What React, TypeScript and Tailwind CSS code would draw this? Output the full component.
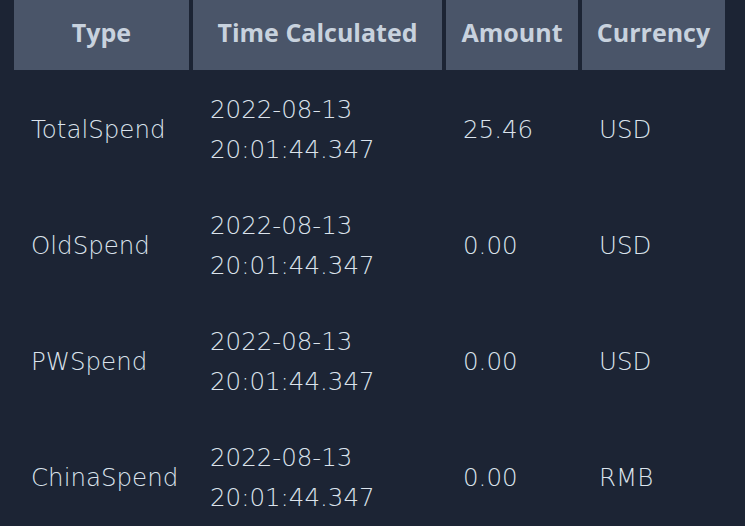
const rows = [
  { type: "TotalSpend", date: "2022-08-13", time: "20:01:44.347", amount: "25.46", currency: "USD" },
  { type: "OldSpend", date: "2022-08-13", time: "20:01:44.347", amount: "0.00", currency: "USD" },
  { type: "PWSpend", date: "2022-08-13", time: "20:01:44.347", amount: "0.00", currency: "USD" },
  { type: "ChinaSpend", date: "2022-08-13", time: "20:01:44.347", amount: "0.00", currency: "RMB" },
];

const headers = ["Type", "Time Calculated", "Amount", "Currency"];

const cell = "h-[116px] flex items-center pl-[17px] pt-[4px] text-[#dbe3ec] text-[24.5px] font-light";

export default function App() {
  return (
    <div
      className="w-[745px] h-[526px] overflow-hidden bg-[#1c2434] px-[14px]"
      style={{ fontFamily: '"DejaVu Sans", "Open Sans", sans-serif' }}
    >
      <div className="grid grid-cols-[175px_249px_132px_143px] gap-x-1">
        {headers.map((h) => (
          <div
            key={h}
            className="h-[70px] flex items-center justify-center pb-[4px] bg-[#4a5569] text-[#c8d2de] text-[25px] font-bold font-['Open_Sans',sans-serif]"
          >
            {h}
          </div>
        ))}
        {rows.map((r) => (
          <div key={r.type} className="contents">
            <div className={cell}>{r.type}</div>
            <div className={`${cell} flex-col !items-start justify-center leading-[40px]`}>
              <span>{r.date}</span>
              <span>{r.time}</span>
            </div>
            <div className={cell}>{r.amount}</div>
            <div className={cell}>{r.currency}</div>
          </div>
        ))}
      </div>
    </div>
  );
}
